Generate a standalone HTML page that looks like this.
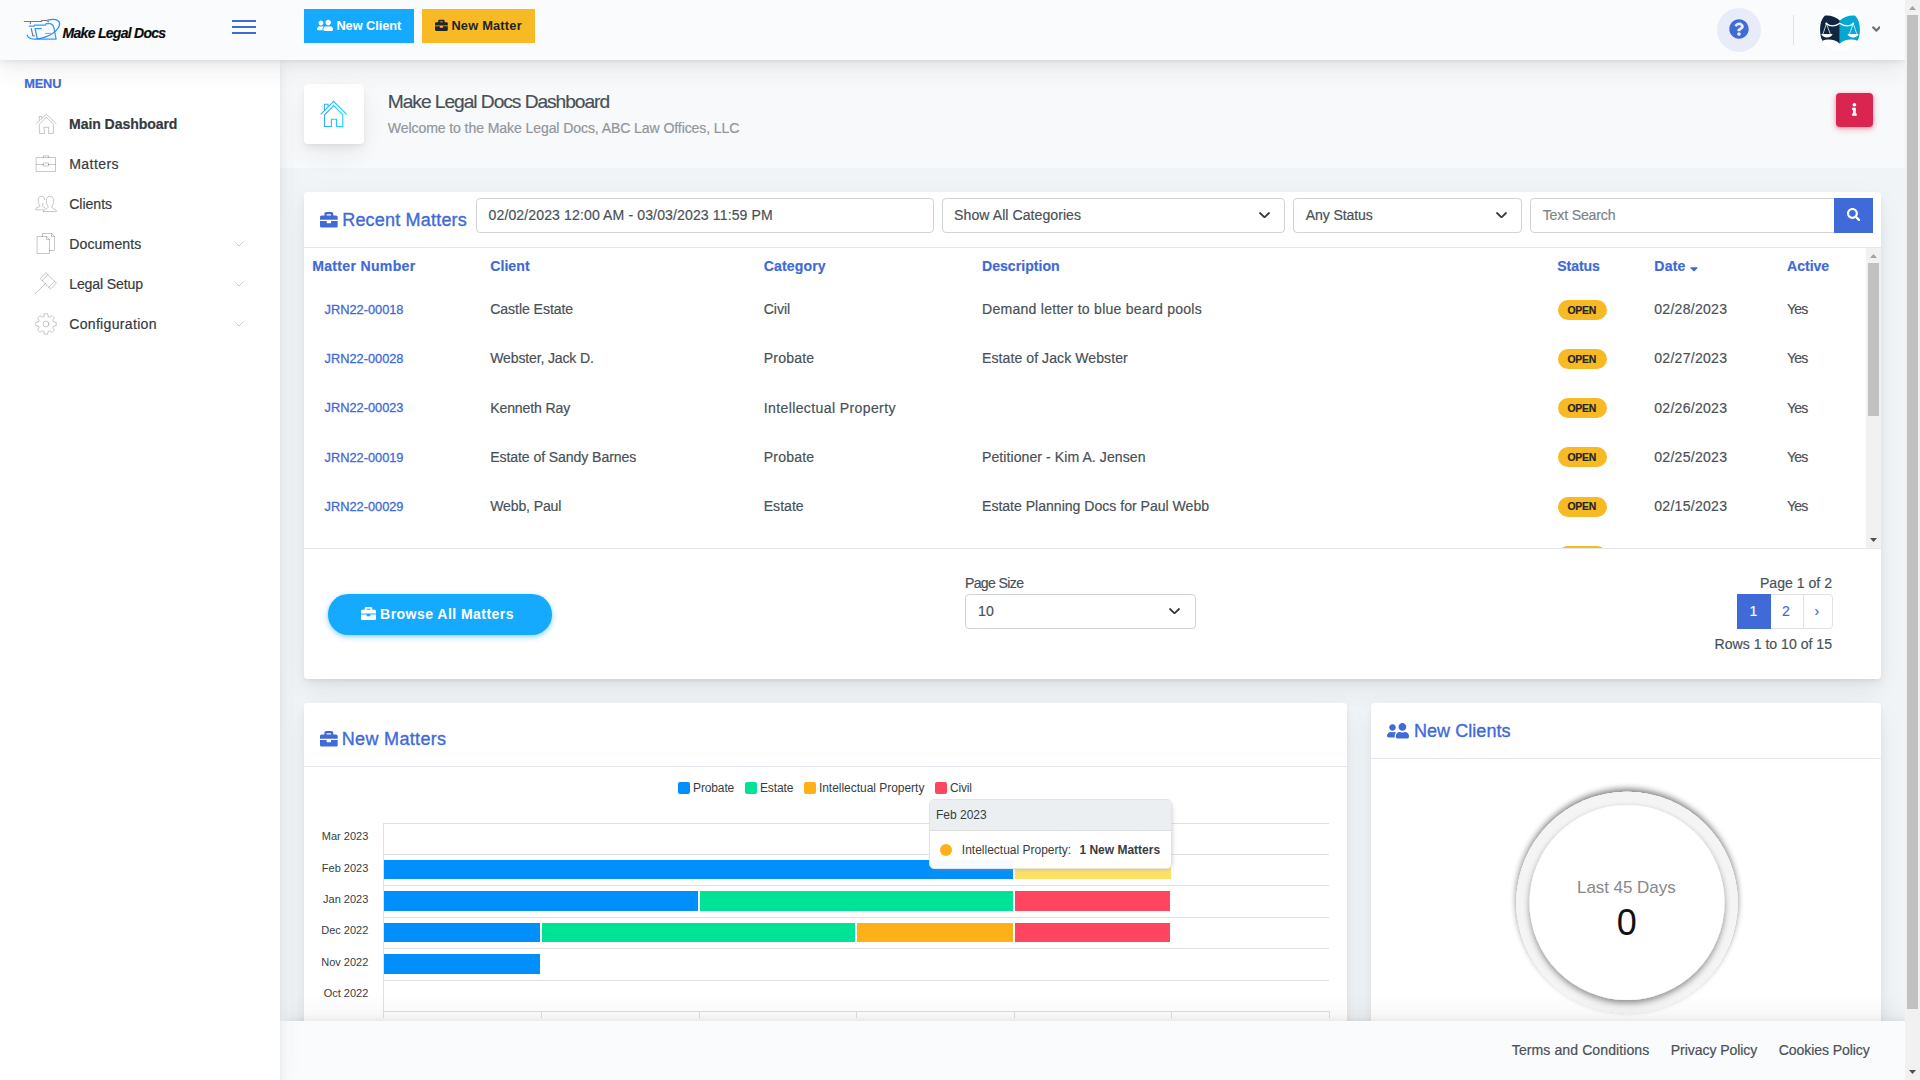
<!DOCTYPE html>
<html lang="en">
<head>
<meta charset="utf-8">
<title>Make Legal Docs Dashboard</title>
<style>
*{box-sizing:border-box;margin:0;padding:0}
html,body{width:1920px;height:1080px;overflow:hidden}
body{font-family:"Liberation Sans",sans-serif;font-size:14.08px;color:#495057;background:#f1f4f6;position:relative}
.abs{position:absolute}
.t{position:absolute;white-space:nowrap;line-height:1;-webkit-text-stroke:.18px currentColor}
svg{display:block}
:root{--sh:0 7.5px 35px rgba(4,9,20,.03),0 15px 22.5px rgba(4,9,20,.03),0 4px 8.5px rgba(4,9,20,.05),0 2px 3px rgba(4,9,20,.03)}

/* ---------- header ---------- */
#header{position:absolute;left:0;top:0;width:1905px;height:60px;background:#fafbfc;box-shadow:var(--sh);z-index:10}
#sidebar{position:absolute;left:0;top:60px;width:280px;height:1020px;background:#fff;box-shadow:var(--sh);z-index:9}
#titlebar{position:absolute;left:280px;top:60px;width:1625px;height:108px;background:rgba(255,255,255,.45)}
#footer{position:absolute;left:280px;top:1021px;width:1625px;height:59px;background:#fafbfc;z-index:8;box-shadow:4.8px -7.5px 35px rgba(4,9,20,.02),4.8px -15px 22.5px rgba(4,9,20,.02),4.8px -4px 8.5px rgba(4,9,20,.04),4.8px -2px 3px rgba(4,9,20,.02)}
.card{position:absolute;background:#fff;border-radius:4px;box-shadow:var(--sh)}
.hline{position:absolute;height:1px;background:rgba(26,54,126,.125)}

/* scrollbar */
#sb{position:absolute;left:1905px;top:0;width:15px;height:1080px;background:#f1f1f1;z-index:20}
#sb .thumb{position:absolute;left:2px;top:15px;width:11px;height:994px;background:#c1c1c1}

.btn{position:absolute;color:#fff}
.inp{position:absolute;background:#fff;border:1px solid #ced4da;border-radius:4px}
.blue{color:#3f6ad8}
.b{font-weight:bold}
</style>
</head>
<body>
<div id="titlebar"></div>
<div class="abs" style="left:304px;top:84px;width:60px;height:60px;background:#fff;border-radius:4px;box-shadow:var(--sh)"></div>
<svg class="abs" style="left:319px;top:99px" width="30" height="30" viewBox="0 0 30 30" fill="none" stroke="url(#hg)" stroke-width="1.1" stroke-linejoin="miter" stroke-linecap="butt"><defs><linearGradient id="hg" gradientUnits="userSpaceOnUse" x1="1" y1="0" x2="28" y2="0"><stop offset="0" stop-color="#3aa2ff"/><stop offset="1" stop-color="#06e2ff"/></linearGradient></defs><path d="M1.700 15.300 L14.600 2.300 L27.700 15.300"/><path d="M12.400 27.500 H5.500 V16 L14.700 6.600 L23.800 15.700 V27.500 H17.600 V20.200 H12.400 Z"/><path d="M5.400 11.200 V5.300 H9 V7.700"/></svg>
<div class="t " style="left:387.80px;top:92.15px;font-size:19.2px;letter-spacing:-1.046px;color:#495057;">Make Legal Docs Dashboard</div>
<div class="t " style="left:387.80px;top:121.08px;font-size:14.08px;letter-spacing:-0.106px;color:#92969a;">Welcome to the Make Legal Docs, ABC Law Offices, LLC</div>
<div class="abs" style="left:1836px;top:93px;width:37px;height:34px;background:#d92550;border-radius:4px;box-shadow:0 2px 6px rgba(217,37,80,.4),0 1px 3px rgba(217,37,80,.2)"></div>
<svg class="abs" style="left:1852px;top:103.4px" width="4.8" height="12.8" viewBox="0 0 192 512"><path fill="#fff" d="M20 424.229h20V279.771H20c-11.046 0-20-8.954-20-20V212c0-11.046 8.954-20 20-20h112c11.046 0 20 8.954 20 20v212.229h20c11.046 0 20 8.954 20 20V492c0 11.046-8.954 20-20 20H20c-11.046 0-20-8.954-20-20v-47.771c0-11.046 8.954-20 20-20zM96 0C56.235 0 24 32.235 24 72s32.235 72 72 72 72-32.235 72-72S135.764 0 96 0z"/></svg>
<div class="card" style="left:304px;top:192px;width:1577px;height:487px"></div>
<div class="hline" style="left:304px;top:247px;width:1577px"></div>
<svg class="abs" style="left:320px;top:210.6px" width="17.7" height="17.7" viewBox="0 0 512 512"><path fill="#3f6ad8" d="M320 336c0 8.840-7.160 16-16 16h-96c-8.840 0-16-7.160-16-16v-48H0v144c0 25.600 22.400 48 48 48h416c25.600 0 48-22.400 48-48V288H320v48zm144-208h-80V80c0-25.600-22.400-48-48-48H176c-25.600 0-48 22.400-48 48v48H48c-25.600 0-48 22.400-48 48v80h512v-80c0-25.600-22.400-48-48-48zm-144 0H192V96h128v32z"/></svg>
<div class="t " style="left:342.20px;top:210.56px;font-size:18px;letter-spacing:0.197px;color:#3f6ad8;-webkit-text-stroke:.35px currentColor;">Recent Matters</div>
<div class="inp" style="left:476px;top:198px;width:458px;height:35px"></div>
<div class="t " style="left:488.50px;top:208.18px;font-size:14.08px;letter-spacing:0.108px;color:#495057;">02/02/2023 12:00 AM - 03/03/2023 11:59 PM</div>
<div class="inp" style="left:942px;top:198px;width:343px;height:35px"></div>
<div class="t " style="left:954.10px;top:208.18px;font-size:14.08px;letter-spacing:0.050px;color:#495057;">Show All Categories</div>
<svg class="abs" style="left:1258.5px;top:211.5px" width="11" height="6.5" viewBox="0 0 11 6.5"><path d="M1 1 L5.5 5.3 L10 1" fill="none" stroke="#343a40" stroke-width="1.8" stroke-linecap="round" stroke-linejoin="round"/></svg>
<div class="inp" style="left:1293px;top:198px;width:229px;height:35px"></div>
<div class="t " style="left:1305.70px;top:208.18px;font-size:14.08px;letter-spacing:-0.110px;color:#495057;">Any Status</div>
<svg class="abs" style="left:1495.5px;top:211.5px" width="11" height="6.5" viewBox="0 0 11 6.5"><path d="M1 1 L5.5 5.3 L10 1" fill="none" stroke="#343a40" stroke-width="1.8" stroke-linecap="round" stroke-linejoin="round"/></svg>
<div class="inp" style="left:1530px;top:198px;width:305px;height:35px;border-radius:4px 0 0 4px"></div>
<div class="t " style="left:1542.70px;top:208.18px;font-size:14.08px;letter-spacing:-0.145px;color:#7b838a;">Text Search</div>
<div class="abs" style="left:1834px;top:198px;width:39px;height:35px;background:#3f6ad8"></div>
<svg class="abs" style="left:1847px;top:208px" width="13.4" height="13.4" viewBox="0 0 512 512"><path fill="#fff" d="M505 442.700L405.300 343c-4.500-4.500-10.600-7-17-7H372c27.600-35.300 44-79.700 44-128C416 93.100 322.900 0 208 0S0 93.100 0 208s93.100 208 208 208c48.300 0 92.700-16.400 128-44v16.300c0 6.400 2.500 12.500 7 17l99.700 99.700c9.400 9.400 24.600 9.400 33.900 0l28.300-28.300c9.400-9.400 9.400-24.600.1-34zM208 336c-70.700 0-128-57.200-128-128 0-70.700 57.200-128 128-128 70.700 0 128 57.200 128 128 0 70.700-57.200 128-128 128z"/></svg>
<div class="t " style="left:312.20px;top:259.08px;font-size:14.08px;font-weight:bold;letter-spacing:0.304px;color:#3f6ad8;">Matter Number</div>
<div class="t " style="left:490.20px;top:259.08px;font-size:14.08px;font-weight:bold;letter-spacing:0.058px;color:#3f6ad8;">Client</div>
<div class="t " style="left:763.70px;top:259.08px;font-size:14.08px;font-weight:bold;letter-spacing:0.124px;color:#3f6ad8;">Category</div>
<div class="t " style="left:982.00px;top:259.08px;font-size:14.08px;font-weight:bold;letter-spacing:0.015px;color:#3f6ad8;">Description</div>
<div class="t " style="left:1557.30px;top:259.08px;font-size:14.08px;font-weight:bold;letter-spacing:-0.086px;color:#3f6ad8;">Status</div>
<div class="t " style="left:1654.30px;top:259.08px;font-size:14.08px;font-weight:bold;letter-spacing:0.194px;color:#3f6ad8;">Date</div>
<div class="t " style="left:1787.00px;top:259.08px;font-size:14.08px;font-weight:bold;letter-spacing:-0.012px;color:#3f6ad8;">Active</div>
<svg class="abs" style="left:1690.4px;top:260.2px" width="8" height="12.8" viewBox="0 0 320 512"><path fill="#3f6ad8" d="M41 288h238c21.400 0 32.100 25.900 17 41L177 448c-9.400 9.400-24.600 9.400-33.900 0L24 329c-15.100-15.100-4.400-41 17-41z"/></svg>
<div class="t " style="left:324.50px;top:303.76px;font-size:12.8px;letter-spacing:0.002px;color:#3f6ad8;-webkit-text-stroke:.3px currentColor;">JRN22-00018</div>
<div class="t " style="left:490.20px;top:302.28px;font-size:14.08px;letter-spacing:-0.061px;color:#495057;">Castle Estate</div>
<div class="t " style="left:763.70px;top:302.28px;font-size:14.08px;letter-spacing:-0.048px;color:#495057;">Civil</div>
<div class="t " style="left:982.00px;top:302.28px;font-size:14.08px;letter-spacing:0.240px;color:#495057;">Demand letter to blue beard pools</div>
<div class="abs" style="left:1558px;top:300.00px;width:49px;height:20px;border-radius:10px;background:#f7b924"></div>
<div class="t " style="left:1567.40px;top:305.70px;font-size:10.4px;font-weight:bold;letter-spacing:-0.225px;color:#212529;">OPEN</div>
<div class="t " style="left:1654.30px;top:302.28px;font-size:14.08px;letter-spacing:0.248px;color:#495057;">02/28/2023</div>
<div class="t " style="left:1787.00px;top:302.28px;font-size:14.08px;letter-spacing:-0.885px;color:#495057;">Yes</div>
<div class="t " style="left:324.50px;top:352.86px;font-size:12.8px;letter-spacing:0.002px;color:#3f6ad8;-webkit-text-stroke:.3px currentColor;">JRN22-00028</div>
<div class="t " style="left:490.20px;top:351.41px;font-size:14.08px;letter-spacing:-0.164px;color:#495057;">Webster, Jack D.</div>
<div class="t " style="left:763.70px;top:351.41px;font-size:14.08px;letter-spacing:0.181px;color:#495057;">Probate</div>
<div class="t " style="left:982.00px;top:351.41px;font-size:14.08px;letter-spacing:0.061px;color:#495057;">Estate of Jack Webster</div>
<div class="abs" style="left:1558px;top:349.13px;width:49px;height:20px;border-radius:10px;background:#f7b924"></div>
<div class="t " style="left:1567.40px;top:354.83px;font-size:10.4px;font-weight:bold;letter-spacing:-0.225px;color:#212529;">OPEN</div>
<div class="t " style="left:1654.30px;top:351.41px;font-size:14.08px;letter-spacing:0.248px;color:#495057;">02/27/2023</div>
<div class="t " style="left:1787.00px;top:351.41px;font-size:14.08px;letter-spacing:-0.885px;color:#495057;">Yes</div>
<div class="t " style="left:324.50px;top:402.06px;font-size:12.8px;letter-spacing:0.002px;color:#3f6ad8;-webkit-text-stroke:.3px currentColor;">JRN22-00023</div>
<div class="t " style="left:490.20px;top:400.54px;font-size:14.08px;letter-spacing:-0.141px;color:#495057;">Kenneth Ray</div>
<div class="t " style="left:763.70px;top:400.54px;font-size:14.08px;letter-spacing:0.368px;color:#495057;">Intellectual Property</div>
<div class="abs" style="left:1558px;top:398.26px;width:49px;height:20px;border-radius:10px;background:#f7b924"></div>
<div class="t " style="left:1567.40px;top:403.96px;font-size:10.4px;font-weight:bold;letter-spacing:-0.225px;color:#212529;">OPEN</div>
<div class="t " style="left:1654.30px;top:400.54px;font-size:14.08px;letter-spacing:0.248px;color:#495057;">02/26/2023</div>
<div class="t " style="left:1787.00px;top:400.54px;font-size:14.08px;letter-spacing:-0.885px;color:#495057;">Yes</div>
<div class="t " style="left:324.50px;top:451.96px;font-size:12.8px;letter-spacing:0.002px;color:#3f6ad8;-webkit-text-stroke:.3px currentColor;">JRN22-00019</div>
<div class="t " style="left:490.20px;top:449.67px;font-size:14.08px;letter-spacing:-0.087px;color:#495057;">Estate of Sandy Barnes</div>
<div class="t " style="left:763.70px;top:449.67px;font-size:14.08px;letter-spacing:0.181px;color:#495057;">Probate</div>
<div class="t " style="left:982.00px;top:449.67px;font-size:14.08px;letter-spacing:0.060px;color:#495057;">Petitioner - Kim A. Jensen</div>
<div class="abs" style="left:1558px;top:447.39px;width:49px;height:20px;border-radius:10px;background:#f7b924"></div>
<div class="t " style="left:1567.40px;top:453.09px;font-size:10.4px;font-weight:bold;letter-spacing:-0.225px;color:#212529;">OPEN</div>
<div class="t " style="left:1654.30px;top:449.67px;font-size:14.08px;letter-spacing:0.248px;color:#495057;">02/25/2023</div>
<div class="t " style="left:1787.00px;top:449.67px;font-size:14.08px;letter-spacing:-0.885px;color:#495057;">Yes</div>
<div class="t " style="left:324.50px;top:501.06px;font-size:12.8px;letter-spacing:0.002px;color:#3f6ad8;-webkit-text-stroke:.3px currentColor;">JRN22-00029</div>
<div class="t " style="left:490.20px;top:498.80px;font-size:14.08px;letter-spacing:-0.148px;color:#495057;">Webb, Paul</div>
<div class="t " style="left:763.70px;top:498.80px;font-size:14.08px;letter-spacing:0.017px;color:#495057;">Estate</div>
<div class="t " style="left:982.00px;top:498.80px;font-size:14.08px;letter-spacing:-0.012px;color:#495057;">Estate Planning Docs for Paul Webb</div>
<div class="abs" style="left:1558px;top:496.52px;width:49px;height:20px;border-radius:10px;background:#f7b924"></div>
<div class="t " style="left:1567.40px;top:502.22px;font-size:10.4px;font-weight:bold;letter-spacing:-0.225px;color:#212529;">OPEN</div>
<div class="t " style="left:1654.30px;top:498.80px;font-size:14.08px;letter-spacing:0.248px;color:#495057;">02/15/2023</div>
<div class="t " style="left:1787.00px;top:498.80px;font-size:14.08px;letter-spacing:-0.885px;color:#495057;">Yes</div>
<div class="abs" style="left:1558px;top:545.6px;width:49px;height:2.4px;overflow:hidden"><div style="width:49px;height:20px;border-radius:10px;background:#f7b924"></div></div>
<div class="abs" style="left:1866px;top:248px;width:15px;height:300px;background:#f1f1f1"></div>
<div class="abs" style="left:1868px;top:263px;width:11px;height:153px;background:#c1c1c1"></div>
<svg class="abs" style="left:1870px;top:254px" width="7" height="4" viewBox="0 0 7 4"><path d="M0 4 L3.500 0 L7 4Z" fill="#a3a3a3"/></svg>
<svg class="abs" style="left:1870px;top:538px" width="7" height="4" viewBox="0 0 7 4"><path d="M0 0 L3.500 4 L7 0Z" fill="#505050"/></svg>
<div class="hline" style="left:304px;top:548px;width:1577px"></div>
<div class="abs" style="left:328px;top:594px;width:224px;height:40.5px;border-radius:20.25px;background:#16aaff;box-shadow:0 2px 6px rgba(22,170,255,.4),0 1px 3px rgba(22,170,255,.2)"></div>
<svg class="abs" style="left:361px;top:605.6px" width="15" height="15" viewBox="0 0 512 512"><path fill="#fff" d="M320 336c0 8.840-7.160 16-16 16h-96c-8.840 0-16-7.160-16-16v-48H0v144c0 25.600 22.400 48 48 48h416c25.600 0 48-22.400 48-48V288H320v48zm144-208h-80V80c0-25.600-22.400-48-48-48H176c-25.600 0-48 22.400-48 48v48H48c-25.600 0-48 22.400-48 48v80h512v-80c0-25.600-22.400-48-48-48zm-144 0H192V96h128v32z"/></svg>
<div class="t " style="left:380.10px;top:606.68px;font-size:14.08px;font-weight:bold;letter-spacing:0.422px;color:#fff;-webkit-text-stroke:0;">Browse All Matters</div>
<div class="t " style="left:964.90px;top:575.98px;font-size:14.08px;letter-spacing:-0.623px;color:#495057;">Page Size</div>
<div class="inp" style="left:965px;top:594px;width:231px;height:35px"></div>
<div class="t " style="left:978.10px;top:603.98px;font-size:14.08px;color:#495057;">10</div>
<svg class="abs" style="left:1169.3px;top:607.7px" width="11" height="6.5" viewBox="0 0 11 6.5"><path d="M1 1 L5.5 5.3 L10 1" fill="none" stroke="#343a40" stroke-width="1.8" stroke-linecap="round" stroke-linejoin="round"/></svg>
<div class="t " style="left:1759.98px;top:575.98px;font-size:14.08px;letter-spacing:-0.000px;color:#495057;">Page 1 of 2</div>
<div class="abs" style="left:1737px;top:594px;width:96px;height:35px;border:1px solid #dee2e6;border-radius:4px;background:#fff"></div>
<div class="abs" style="left:1737px;top:594px;width:34px;height:35px;background:#3f6ad8"></div>
<div class="abs" style="left:1803px;top:594px;width:1px;height:35px;background:#dee2e6"></div>
<div class="t " style="left:1749.50px;top:603.98px;font-size:14.08px;color:#fff;">1</div>
<div class="t " style="left:1782.10px;top:603.98px;font-size:14.08px;color:#3f6ad8;">2</div>
<div class="t " style="left:1814.50px;top:603.58px;font-size:14.08px;color:#3f6ad8;">›</div>
<div class="t " style="left:1714.60px;top:637.08px;font-size:14.08px;letter-spacing:0.000px;color:#495057;">Rows 1 to 10 of 15</div>
<div class="card" style="left:304px;top:703px;width:1043px;height:420px"></div>
<div class="hline" style="left:304px;top:766px;width:1043px"></div>
<svg class="abs" style="left:320px;top:729.6px" width="17.7" height="17.7" viewBox="0 0 512 512"><path fill="#3f6ad8" d="M320 336c0 8.840-7.160 16-16 16h-96c-8.840 0-16-7.160-16-16v-48H0v144c0 25.600 22.400 48 48 48h416c25.600 0 48-22.400 48-48V288H320v48zm144-208h-80V80c0-25.600-22.400-48-48-48H176c-25.600 0-48 22.400-48 48v48H48c-25.600 0-48 22.400-48 48v80h512v-80c0-25.600-22.400-48-48-48zm-144 0H192V96h128v32z"/></svg>
<div class="t " style="left:341.80px;top:730.06px;font-size:18px;letter-spacing:0.328px;color:#3f6ad8;-webkit-text-stroke:.35px currentColor;">New Matters</div>
<div class="abs" style="left:677.8px;top:782px;width:12px;height:12px;border-radius:2px;background:#008ffb"></div>
<div class="t " style="left:693.00px;top:782.24px;font-size:12px;letter-spacing:-0.122px;color:#373d3f;-webkit-text-stroke:0;">Probate</div>
<div class="abs" style="left:744.9px;top:782px;width:12px;height:12px;border-radius:2px;background:#00e396"></div>
<div class="t " style="left:759.90px;top:782.24px;font-size:12px;letter-spacing:-0.104px;color:#373d3f;-webkit-text-stroke:0;">Estate</div>
<div class="abs" style="left:804px;top:782px;width:12px;height:12px;border-radius:2px;background:#feb019"></div>
<div class="t " style="left:818.90px;top:782.24px;font-size:12px;letter-spacing:-0.028px;color:#373d3f;-webkit-text-stroke:0;">Intellectual Property</div>
<div class="abs" style="left:934.7px;top:782px;width:12px;height:12px;border-radius:2px;background:#ff4560"></div>
<div class="t " style="left:950.00px;top:782.24px;font-size:12px;letter-spacing:-0.191px;color:#373d3f;-webkit-text-stroke:0;">Civil</div>
<div class="abs" style="left:384px;top:822.60px;width:945px;height:1px;background:#e0e0e0"></div>
<div class="abs" style="left:384px;top:854.00px;width:945px;height:1px;background:#e0e0e0"></div>
<div class="abs" style="left:384px;top:885.40px;width:945px;height:1px;background:#e0e0e0"></div>
<div class="abs" style="left:384px;top:916.80px;width:945px;height:1px;background:#e0e0e0"></div>
<div class="abs" style="left:384px;top:948.20px;width:945px;height:1px;background:#e0e0e0"></div>
<div class="abs" style="left:384px;top:979.60px;width:945px;height:1px;background:#e0e0e0"></div>
<div class="abs" style="left:384px;top:1011.00px;width:945px;height:1px;background:#e0e0e0"></div>
<div class="abs" style="left:383px;top:823px;width:1px;height:195px;background:#e0e0e0"></div>
<div class="abs" style="left:541.00px;top:1011px;width:1px;height:7px;background:#e0e0e0"></div>
<div class="abs" style="left:698.50px;top:1011px;width:1px;height:7px;background:#e0e0e0"></div>
<div class="abs" style="left:856.00px;top:1011px;width:1px;height:7px;background:#e0e0e0"></div>
<div class="abs" style="left:1013.50px;top:1011px;width:1px;height:7px;background:#e0e0e0"></div>
<div class="abs" style="left:1171.00px;top:1011px;width:1px;height:7px;background:#e0e0e0"></div>
<div class="abs" style="left:1328.50px;top:1011px;width:1px;height:7px;background:#e0e0e0"></div>
<div class="t " style="left:321.83px;top:830.99px;font-size:11px;letter-spacing:0.000px;color:#373d3f;-webkit-text-stroke:0;">Mar 2023</div>
<div class="t " style="left:321.82px;top:862.99px;font-size:11px;letter-spacing:0.000px;color:#373d3f;-webkit-text-stroke:0;">Feb 2023</div>
<div class="t " style="left:323.04px;top:893.99px;font-size:11px;letter-spacing:0.000px;color:#373d3f;-webkit-text-stroke:0;">Jan 2023</div>
<div class="t " style="left:321.21px;top:924.99px;font-size:11px;letter-spacing:0.000px;color:#373d3f;-webkit-text-stroke:0;">Dec 2022</div>
<div class="t " style="left:321.21px;top:956.99px;font-size:11px;letter-spacing:0.000px;color:#373d3f;-webkit-text-stroke:0;">Nov 2022</div>
<div class="t " style="left:323.66px;top:987.99px;font-size:11px;letter-spacing:-0.000px;color:#373d3f;-webkit-text-stroke:0;">Oct 2022</div>
<div class="abs" style="left:384.20px;top:859.80px;width:628.55px;height:19.5px;background:#008ffb"></div>
<div class="abs" style="left:1014.80px;top:859.80px;width:156.00px;height:19.5px;background:#fde167"></div>
<div class="abs" style="left:384.20px;top:891.20px;width:313.55px;height:19.5px;background:#008ffb"></div>
<div class="abs" style="left:699.80px;top:891.20px;width:312.95px;height:19.5px;background:#00e396"></div>
<div class="abs" style="left:1014.80px;top:891.20px;width:155.45px;height:19.5px;background:#ff4560"></div>
<div class="abs" style="left:384.20px;top:922.60px;width:156.05px;height:19.5px;background:#008ffb"></div>
<div class="abs" style="left:542.30px;top:922.60px;width:312.95px;height:19.5px;background:#00e396"></div>
<div class="abs" style="left:857.30px;top:922.60px;width:155.45px;height:19.5px;background:#feb019"></div>
<div class="abs" style="left:1014.80px;top:922.60px;width:155.45px;height:19.5px;background:#ff4560"></div>
<div class="abs" style="left:384.20px;top:954.00px;width:156.05px;height:19.5px;background:#008ffb"></div>
<div class="abs" style="left:929px;top:799px;width:242.5px;height:70px;background:rgba(255,255,255,.96);border:1px solid #e3e3e3;border-radius:5px;box-shadow:2px 2px 6px -4px #999;overflow:hidden"><div style="height:31px;background:#eceff1;border-bottom:1px solid #ddd"></div></div>
<div class="t " style="left:936.00px;top:809.14px;font-size:12px;color:#373d3f;-webkit-text-stroke:0;">Feb 2023</div>
<div class="abs" style="left:940px;top:844px;width:12px;height:12px;border-radius:6px;background:#feb019"></div>
<div class="t " style="left:961.80px;top:844.04px;font-size:12px;color:#373d3f;-webkit-text-stroke:0;">Intellectual Property: </div>
<div class="t " style="left:1079.40px;top:844.04px;font-size:12px;font-weight:bold;letter-spacing:0.000px;color:#373d3f;-webkit-text-stroke:0;">1 New Matters</div>
<div class="card" style="left:1371px;top:703px;width:510px;height:420px"></div>
<div class="hline" style="left:1371px;top:758px;width:510px"></div>
<svg class="abs" style="left:1387px;top:721.8px" width="22" height="17.6" viewBox="0 0 640 512"><path fill="#3f6ad8" transform="translate(640,0) scale(-1,1)" d="M192 256c61.900 0 112-50.100 112-112S253.900 32 192 32 80 82.100 80 144s50.100 112 112 112zm76.800 32h-8.300c-20.800 10-43.900 16-68.500 16s-47.600-6-68.500-16h-8.300C51.600 288 0 339.600 0 403.200V432c0 26.500 21.500 48 48 48h288c26.500 0 48-21.500 48-48v-28.800c0-63.600-51.600-115.200-115.200-115.200zM480 256c53 0 96-43 96-96s-43-96-96-96-96 43-96 96 43 96 96 96zm48 32h-3.800c-13.900 4.800-28.600 8-44.200 8s-30.300-3.200-44.200-8H432c-20.400 0-39.200 5.900-55.700 15.400 24.400 26.300 39.700 61.200 39.700 99.800v38.400c0 2.200-.5 4.300-.6 6.400H592c26.500 0 48-21.500 48-48 0-61.900-50.100-112-112-112z"/></svg>
<div class="t " style="left:1413.90px;top:721.76px;font-size:18px;letter-spacing:0.067px;color:#3f6ad8;-webkit-text-stroke:.35px currentColor;">New Clients</div>
<svg class="abs" style="left:1497px;top:772px" width="260" height="262" viewBox="0 0 260 262">
<defs>
<filter id="fs1" x="-20%" y="-20%" width="140%" height="140%"><feGaussianBlur in="SourceAlpha" stdDeviation="3.2"/><feOffset dx="0" dy="-3"/><feComponentTransfer><feFuncA type="linear" slope=".5"/></feComponentTransfer><feMerge><feMergeNode/><feMergeNode in="SourceGraphic"/></feMerge></filter>
<filter id="fs2" x="-20%" y="-20%" width="140%" height="140%"><feGaussianBlur in="SourceAlpha" stdDeviation="3.2"/><feOffset dx="0" dy="3"/><feComponentTransfer><feFuncA type="linear" slope=".42"/></feComponentTransfer><feMerge><feMergeNode/><feMergeNode in="SourceGraphic"/></feMerge></filter>
</defs>
<circle cx="130" cy="130.500" r="110.700" fill="#fff" filter="url(#fs1)"/>
<circle cx="130" cy="130.500" r="110.700" fill="#f4f4f4"/>
<circle cx="130" cy="130.500" r="97.500" fill="#fff" filter="url(#fs2)"/>
</svg>
<div class="t " style="left:1577.00px;top:878.91px;font-size:17px;letter-spacing:-0.047px;color:#888;-webkit-text-stroke:0;">Last 45 Days</div>
<div class="t " style="left:1616.80px;top:904.53px;font-size:36px;color:#111;-webkit-text-stroke:0;">0</div>
<div id="footer"><div class="t " style="left:1231.80px;top:22.08px;font-size:14.08px;letter-spacing:0.070px;color:#495057;">Terms and Conditions</div>
<div class="t " style="left:1390.80px;top:22.08px;font-size:14.08px;letter-spacing:-0.087px;color:#495057;">Privacy Policy</div>
<div class="t " style="left:1498.80px;top:22.08px;font-size:14.08px;letter-spacing:-0.103px;color:#495057;">Cookies Policy</div></div>
<div id="sidebar">
  <div class="t b blue" style="left:24.3px;top:17.5px;font-size:12.8px;letter-spacing:-0.2px">MENU</div>
  <!-- Main Dashboard -->
  <svg class="abs" style="left:34px;top:52px" width="24" height="24" viewBox="0 0 24 24" stroke="#343a40" stroke-opacity=".28" fill="none" stroke-width="1" stroke-linejoin="round" stroke-linecap="round"><path d="M2.400 11.700 L12.300 2.200 L22.200 11.700"/><path d="M10.300 21.400 H5.400 V12.200 L12.400 5.200 L19.400 12.200 V21.400 H14.600 V15.300 H10.300 Z"/><path d="M5.300 8 V4.300 H7.700 V5.900"/></svg>
  <div class="t b" style="left:69px;top:56.700px;color:#343a40;letter-spacing:-0.08px">Main Dashboard</div>
  <!-- Matters -->
  <svg class="abs" style="left:34px;top:92px" width="24" height="24" viewBox="0 0 24 24" stroke="#343a40" stroke-opacity=".28" fill="none" stroke-width="1" stroke-linejoin="round" stroke-linecap="round"><rect x="2.500" y="5.500" width="19" height="14"/><path d="M9.500 5.500 V3.800 H14.500 V5.500"/><path d="M2.500 12.500 H9.500 M14.500 12.500 H21.500"/><rect x="9.500" y="11" width="5" height="3"/></svg>
  <div class="t" style="left:69.200px;top:96.700px;color:#343a40;letter-spacing:0.42px">Matters</div>
  <!-- Clients -->
  <svg class="abs" style="left:34px;top:132px" width="24" height="24" viewBox="0 0 24 24" stroke="#343a40" stroke-opacity=".28" fill="none" stroke-width="1" stroke-linejoin="round" stroke-linecap="round"><path d="M9.600 19.500 H22.300 C22.500 18.300 22 17.600 20.600 17.100 C18.900 16.500 17.900 16.100 17.900 14.700 C17.900 13.900 18.700 13.300 18.900 12.100 C19.800 11.700 19.600 10.200 19.300 9.900 C19.600 8.700 19.700 7.300 19.200 6.300 C18.500 4.800 17.300 4.200 15.900 4.200 C14.500 4.200 13.300 4.900 12.700 6.300 C12.300 7.400 12.400 8.700 12.700 9.900 C12.300 10.200 12.200 11.700 13.100 12.100 C13.300 13.300 14.100 13.900 14.100 14.700 C14.100 16.100 13.100 16.500 11.400 17.100 C10 17.600 9.400 18.300 9.600 19.500Z"/><path d="M9.200 17.800 H1.700 C1.500 16.700 2 16.100 3.200 15.700 C4.800 15.200 5.700 14.800 5.700 13.600 C5.700 12.900 5 12.300 4.800 11.300 C4 10.900 4.200 9.600 4.400 9.300 C4.100 8.200 4.100 7 4.500 6.100 C5.100 4.800 6.200 4.300 7.400 4.300 C8.700 4.300 9.800 4.900 10.400 6.100 C10.600 6.500 10.700 7 10.700 7.500 M9.200 11.300 C9.100 12.300 8.300 12.900 8.300 13.600 C8.300 14.600 9.400 15.100 10.600 15.500"/></svg>
  <div class="t" style="left:69.200px;top:136.700px;color:#343a40;letter-spacing:-0.02px">Clients</div>
  <!-- Documents -->
  <svg class="abs" style="left:34px;top:172px" width="24" height="24" viewBox="0 0 24 24" stroke="#343a40" stroke-opacity=".28" fill="none" stroke-width="1" stroke-linejoin="round" stroke-linecap="round"><path d="M8.500 4.500 V1.500 H17.500 L20.500 4.500 V18.500 H15.500"/><path d="M17.500 1.500 V4.500 H20.500"/><path d="M3.500 4.500 H12.500 L15.500 7.500 V21.500 H3.500 Z"/><path d="M12.500 4.500 V7.500 H15.500"/></svg>
  <div class="t" style="left:69.200px;top:176.700px;color:#343a40;letter-spacing:0.12px">Documents</div>
  <svg class="abs" style="left:234px;top:180.500px" width="10" height="6" viewBox="0 0 10 6" stroke="#343a40" stroke-opacity=".28" fill="none" stroke-width="1" stroke-linejoin="round" stroke-linecap="round"><path d="M.6 .7 L5 5 L9.400 .7"/></svg>
  <!-- Legal Setup -->
  <svg class="abs" style="left:34px;top:212px" width="24" height="24" viewBox="0 0 24 24" stroke="#343a40" stroke-opacity=".28" fill="none" stroke-width="1" stroke-linejoin="round" stroke-linecap="round"><path d="M1.300 21.800 L11.500 11.500"/><path d="M12.100 .8 L22.400 11.100 L16.500 16.900 L6.600 7 Z"/><path d="M13.800 2.500 L8.300 8.700 M20.700 9.400 L14.800 15.200"/></svg>
  <div class="t" style="left:69.200px;top:216.700px;color:#343a40;letter-spacing:-0.12px">Legal Setup</div>
  <svg class="abs" style="left:234px;top:220.500px" width="10" height="6" viewBox="0 0 10 6" stroke="#343a40" stroke-opacity=".28" fill="none" stroke-width="1" stroke-linejoin="round" stroke-linecap="round"><path d="M.6 .7 L5 5 L9.400 .7"/></svg>
  <!-- Configuration -->
  <svg class="abs" style="left:34px;top:252px" width="24" height="24" viewBox="0 0 24 24" stroke="#343a40" stroke-opacity=".28" fill="none" stroke-width="1" stroke-linejoin="round" stroke-linecap="round"><circle cx="12" cy="12" r="2.900"/><path id="gear" d="M10.300 1.800 H13.700 L14.100 4.500 L15.800 5.200 L18 3.600 L20.400 6 L18.800 8.200 L19.500 9.900 L22.200 10.300 V13.700 L19.500 14.100 L18.800 15.800 L20.400 18 L18 20.400 L15.800 18.800 L14.100 19.500 L13.700 22.200 H10.300 L9.900 19.500 L8.200 18.800 L6 20.400 L3.600 18 L5.200 15.800 L4.500 14.100 L1.800 13.700 V10.300 L4.500 9.900 L5.200 8.200 L3.600 6 L6 3.600 L8.200 5.200 L9.900 4.500 Z"/></svg>
  <div class="t" style="left:69.200px;top:256.700px;color:#343a40;letter-spacing:0.3px">Configuration</div>
  <svg class="abs" style="left:234px;top:260.500px" width="10" height="6" viewBox="0 0 10 6" stroke="#343a40" stroke-opacity=".28" fill="none" stroke-width="1" stroke-linejoin="round" stroke-linecap="round"><path d="M.6 .7 L5 5 L9.400 .7"/></svg>
</div>

<div id="header">
  <!-- logo -->
  <svg class="abs" style="left:20px;top:14px" width="48" height="30" viewBox="0 0 48 30">
    <g fill="none" stroke-linecap="round" stroke-linejoin="round">
      <path d="M4.300 7.500 H21.400 L21.800 6.500 H26.600 L28.500 7.800 M10.400 8 V9.600" stroke="#77797d" stroke-width="1.150"/>
      <path d="M11.300 14.500 L12.800 21.600 L14.300 21.900" stroke="#6d7075" stroke-width="1.100"/>
      <path d="M9.300 12.200 H13.900 L14.800 11 H25.500 L26 9.700 H30 C32.400 10 33.400 11.600 33.800 13.400 L36.100 25 H17.300 L15.100 14.500 H21.300" stroke="#3399ff" stroke-width="1.250"/>
      <path d="M25.400 19.400 H30.500" stroke="#5eb0ff" stroke-width="1"/>
      <path d="M28 5.900 C32 5.100 35.600 5.200 37.800 6.500 C40.200 8 40.100 11 38.200 14 C35.800 17.600 31 21 25 23.200 C21 24.600 16 25.400 12.500 25 C9.500 24.600 7.600 23 7.200 21" stroke="#1e8fff" stroke-width="1.250"/>
    </g>
  </svg>
  <div class="t" id="logotxt" style="left:62.6px;top:26.4px;font-size:14px;font-weight:bold;font-style:italic;color:#0b0b0b;letter-spacing:-0.72px">Make Legal Docs</div>
  <!-- hamburger -->
  <div class="abs" style="left:232px;top:20px;width:24px;height:2px;background:#3f6ad8"></div>
  <div class="abs" style="left:232px;top:26px;width:24px;height:2px;background:#3f6ad8"></div>
  <div class="abs" style="left:232px;top:32px;width:24px;height:2px;background:#3f6ad8"></div>
  <!-- buttons -->
  <div class="abs" style="left:304px;top:9px;width:110px;height:34px;background:#16aaff"></div>
  <svg class="abs" style="left:317px;top:19px" width="16" height="12.8" viewBox="0 0 640 512"><path fill="#fff" transform="translate(640,0) scale(-1,1)" d="M192 256c61.9 0 112-50.1 112-112S253.900 32 192 32 80 82.100 80 144s50.100 112 112 112zm76.800 32h-8.300c-20.800 10-43.900 16-68.500 16s-47.600-6-68.500-16h-8.300C51.600 288 0 339.600 0 403.200V432c0 26.500 21.500 48 48 48h288c26.500 0 48-21.500 48-48v-28.800c0-63.600-51.600-115.200-115.200-115.200zM480 256c53 0 96-43 96-96s-43-96-96-96-96 43-96 96 43 96 96 96zm48 32h-3.800c-13.900 4.800-28.600 8-44.200 8s-30.300-3.200-44.200-8H432c-20.400 0-39.200 5.900-55.700 15.400 24.400 26.300 39.700 61.200 39.700 99.800v38.400c0 2.200-.5 4.300-.6 6.400H592c26.500 0 48-21.500 48-48 0-61.900-50.100-112-112-112z"/></svg>
  <div class="t b" style="left:336.4px;top:19.6px;font-size:12.8px;color:#fff;letter-spacing:-0.05px;-webkit-text-stroke:0">New Client</div>
  <div class="abs" style="left:422px;top:9px;width:113px;height:34px;background:#f7b924"></div>
  <svg class="abs" style="left:435.4px;top:19.2px" width="12.8" height="12.8" viewBox="0 0 512 512"><path fill="#212529" d="M320 336c0 8.840-7.160 16-16 16h-96c-8.840 0-16-7.160-16-16v-48H0v144c0 25.600 22.400 48 48 48h416c25.600 0 48-22.400 48-48V288H320v48zm144-208h-80V80c0-25.600-22.400-48-48-48H176c-25.600 0-48 22.400-48 48v48H48c-25.600 0-48 22.400-48 48v80h512v-80c0-25.600-22.400-48-48-48zm-144 0H192V96h128v32z"/></svg>
  <div class="t b" style="left:451.4px;top:19.6px;font-size:12.8px;color:#212529;letter-spacing:0.22px;-webkit-text-stroke:0">New Matter</div>
  <!-- help -->
  <div class="abs" style="left:1717px;top:8px;width:44px;height:44px;border-radius:22px;background:#e8ecf9"></div>
  <svg class="abs" style="left:1728.800px;top:19.200px" width="20" height="20" viewBox="0 0 512 512"><path fill="#3f6ad8" d="M504 256c0 136.997-111.043 248-248 248S8 392.997 8 256C8 119.083 119.043 8 256 8s248 111.083 248 248zM262.655 90c-54.497 0-89.255 22.957-116.549 63.758-3.536 5.286-2.353 12.415 2.715 16.258l34.699 26.310c5.205 3.947 12.621 3.008 16.665-2.122 17.864-22.658 30.113-35.797 57.303-35.797 20.429 0 45.698 13.148 45.698 32.958 0 14.976-12.363 22.667-32.534 33.976C247.128 238.528 216 254.941 216 296v4c0 6.627 5.373 12 12 12h56c6.627 0 12-5.373 12-12v-1.333c0-28.462 83.186-29.647 83.186-106.667 0-58.002-60.165-102-116.531-102zM256 338c-25.365 0-46 20.635-46 46 0 25.364 20.635 46 46 46s46-20.636 46-46c0-25.365-20.635-46-46-46z"/></svg>
  <div class="abs" style="left:1793px;top:15px;width:1px;height:30px;background:#dfe1e5"></div>
  <!-- avatar -->
  <div class="abs" style="left:1819px;top:9px;width:42px;height:42px;border-radius:21px;background:#fff;overflow:hidden">
    <svg width="42" height="42" viewBox="0 0 42 42">
      <path d="M4.700 7 C9.500 5.800 16 7.400 20.800 11.600 V34.700 C16.500 30.600 9 29.400 3.300 31.800 C0.400 26 -0.200 14 4.700 7Z" fill="#0f2540"/>
      <path d="M37 7 C32.200 5.800 25.600 7.400 20.800 11.600 V34.700 C25.200 30.600 32.600 29.400 38.700 31.800 C41.600 26 42.200 14 37 7Z" fill="#04a7d3"/>
      <g fill="none" stroke="#fff" stroke-linecap="round" stroke-linejoin="round">
        <path d="M7.400 14.500 C10.500 17.600 16.500 17.800 20.800 14.300 C25.200 17.800 31.200 17.600 34.300 14.500" stroke-width="1.300"/>
        <path d="M7.400 14.700 L3.900 25.200 M7.400 14.700 L11.400 25.200 M34.300 14.700 L30.300 25.200 M34.300 14.700 L37.900 25.200" stroke-width=".75"/>
      </g>
      <circle cx="7.400" cy="14.400" r="1" fill="#fff"/><circle cx="34.300" cy="14.400" r="1" fill="#fff"/>
      <path d="M2.300 25.100 H13.600 C12.600 29.600 3.300 29.600 2.300 25.100Z M28.500 25.100 H39.600 C38.600 29.600 29.500 29.600 28.500 25.100Z" fill="#fff"/>
    </svg>
  </div>
  <svg class="abs" style="left:1871.700px;top:21.500px" width="8.750" height="14" viewBox="0 0 320 512"><path fill="#6c757d" d="M143 352.300L7 216.300c-9.400-9.400-9.400-24.600 0-33.900l22.600-22.600c9.400-9.400 24.600-9.400 33.900 0l96.400 96.400 96.400-96.400c9.400-9.400 24.600-9.400 33.900 0l22.600 22.600c9.400 9.400 9.400 24.600 0 33.900l-136 136c-9.200 9.400-24.400 9.400-33.800 0z"/></svg>
</div>

<div id="sb"><div class="thumb"></div>
<svg class="abs" style="left:4px;top:6px" width="7" height="4" viewBox="0 0 7 4"><path d="M0 4 L3.500 0 L7 4Z" fill="#a3a3a3"/></svg>
<svg class="abs" style="left:4px;top:1070px" width="7" height="4" viewBox="0 0 7 4"><path d="M0 0 L3.500 4 L7 0Z" fill="#505050"/></svg>
</div>
</body>
</html>
